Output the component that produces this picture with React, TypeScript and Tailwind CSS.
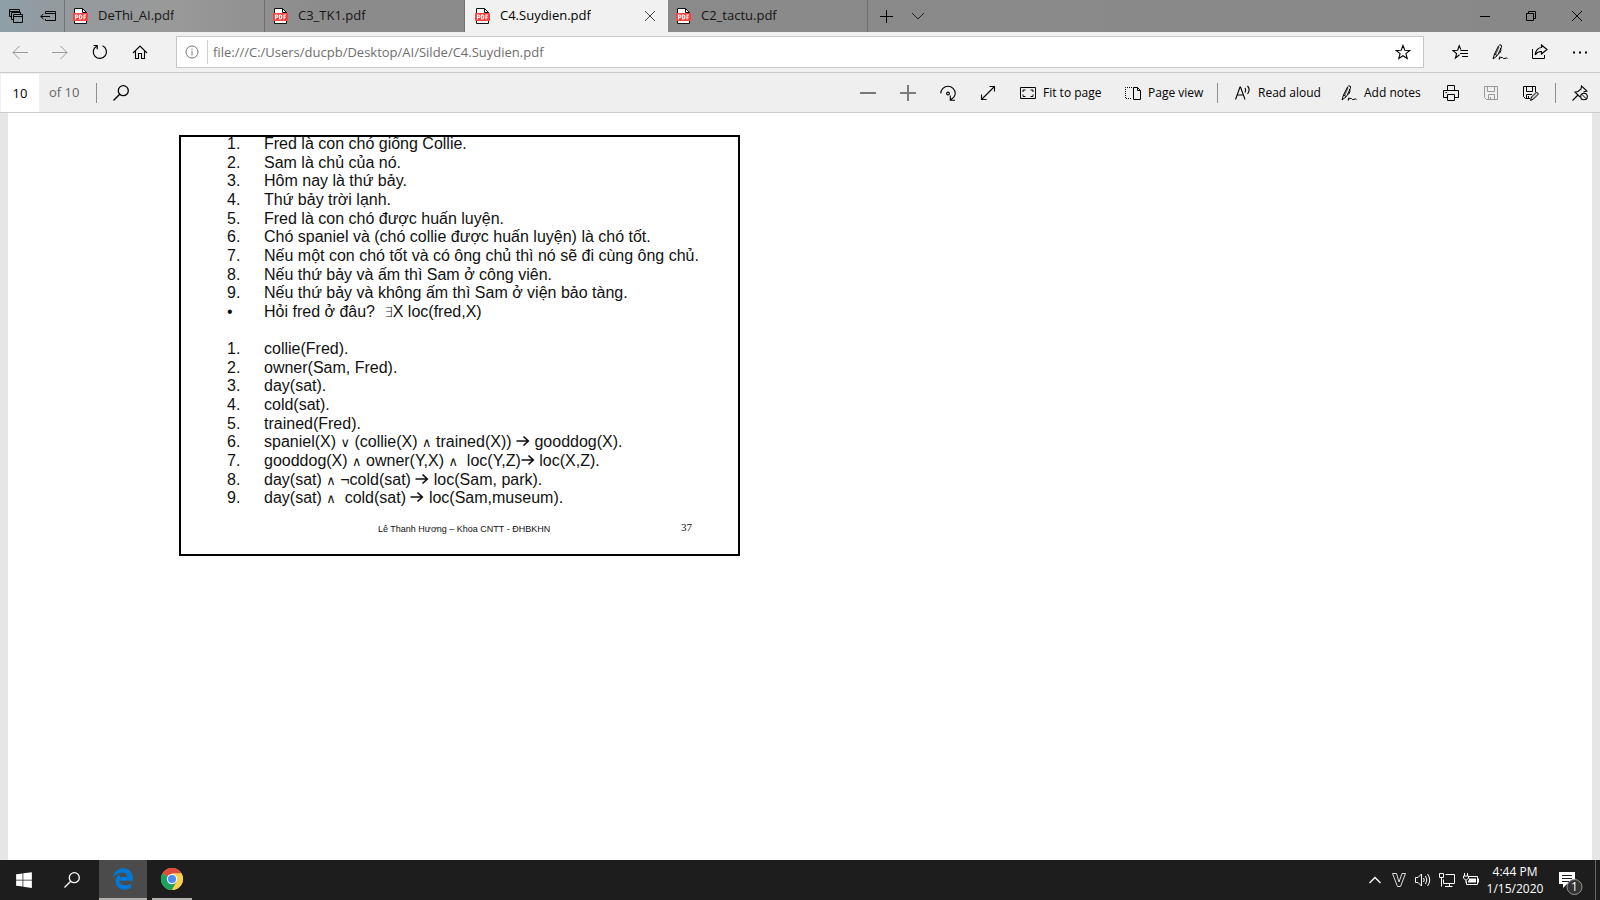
import React from "react";
import { FaEdgeLegacy, FaWindows } from "react-icons/fa6";

type IconProps = { size?: number; className?: string; sw?: number; children: React.ReactNode };

function Icon({ size = 16, className = "", sw = 1, children }: IconProps) {
  return (
    <svg
      width={size}
      height={size}
      viewBox={`0 0 ${size} ${size}`}
      fill="none"
      stroke="currentColor"
      strokeWidth={sw}
      className={`shrink-0 ${className}`}
      aria-hidden="true"
    >
      {children}
    </svg>
  );
}

function IconButton({ label, className = "w-10", children }: { label: string; className?: string; children: React.ReactNode }) {
  return (
    <button type="button" aria-label={label} className={`flex h-full shrink-0 items-center justify-center ${className}`}>
      {children}
    </button>
  );
}

function PdfIcon() {
  return (
    <svg width="15" height="16" viewBox="0 0 15 16" fill="none" className="shrink-0" aria-hidden="true">
      <path d="M1.500 .5H9.500L13.500 4.500V15.500H1.500Z" fill="#fff" stroke="#111" />
      <path d="M9.500 .5V4.500H13.500" stroke="#111" />
      <rect x="0" y="5" width="15" height="8" rx="1" fill="#f9423f" />
      <path
        d="M2.500 11.500V7H3.800a1.200 1.200 0 0 1 0 2.400H2.500M6.600 7V11H7.300a1.500 1.500 0 0 0 1.500-1.500V8.500A1.500 1.500 0 0 0 7.300 7ZM11 11.500V7H13M11 9.200H12.700"
        stroke="#fff"
        strokeWidth="1.100"
      />
    </svg>
  );
}

function PenIcon() {
  return (
    <Icon>
      <path d="M1 15L2.500 10L6.500 2Q7.500 .3 9 1Q10.200 1.800 9.300 3.600L5.500 11.500L1 15M2.500 10L5 11.500M8.500 4L9 6.500L7.500 9.500M8 12.500L7 15.300Q9 12.500 10.500 13.500Q11.500 15.300 13 14.400Q14.300 13.400 15.500 14.400" />
      <path d="M7 2.500L3.500 10.500" strokeWidth="1.4" strokeOpacity=".55" />
    </Icon>
  );
}

function SearchIcon() {
  return (
    <Icon sw={1.3}>
      <circle cx="10.300" cy="5.700" r="5" />
      <path d="M6.700 9.300L.5 15.500" />
    </Icon>
  );
}

function Tab({ title, active = false }: { title: string; active?: boolean }) {
  return (
    <div
      className={
        active
          ? "flex h-full w-[203px] min-w-0 items-center bg-[#f1f1f1] pl-2.5 text-black"
          : "flex h-full w-[200px] min-w-0 items-center border-r border-[#6f6f6f] pl-2 text-[#161616]"
      }
    >
      <button type="button" className="flex min-w-0 flex-1 items-center gap-2.5 text-left">
        <PdfIcon />
        <span className="truncate">{title}</span>
      </button>
      {active && (
        <IconButton label="Close tab" className="w-9">
          <Icon size={10} className="text-[#444]">
            <path d="M0 0L10 10M10 0L0 10" />
          </Icon>
        </IconButton>
      )}
    </div>
  );
}

function TabStrip() {
  return (
    <header className="flex h-8 shrink-0 items-stretch bg-[linear-gradient(90deg,#8e9fa9_0px,#949a9d_60px,#999999_170px,#8b8b8b_330px,#888888_100%)] text-[13px]">
      <div className="flex w-[65px] shrink-0 items-center border-r border-[#6f7679]">
        <IconButton label="Tabs you've set aside" className="w-8">
          <Icon className="text-black">
            <path d="M3 8.500H1.500V1.500H11.500V4M1.500 3.500H11.500" />
            <path d="M5 11.500H3.500V4.500H12.500V6" />
            <path d="M5.500 6.500H14.500V14.500H5.500ZM5.500 8.500H14.500" />
          </Icon>
        </IconButton>
        <IconButton label="Set these tabs aside" className="w-8">
          <Icon className="text-black">
            <path d="M5.500 6V3.500H15.500V12.500H5.500V11M5.500 5.500H15.500M.8 8.500H10M3.500 5.800L.8 8.500L3.500 11.200" />
          </Icon>
        </IconButton>
      </div>
      <Tab title="DeThi_AI.pdf" />
      <Tab title="C3_TK1.pdf" />
      <Tab title="C4.Suydien.pdf" active />
      <Tab title="C2_tactu.pdf" />
      <IconButton label="New tab" className="w-9">
        <Icon size={13} className="text-black">
          <path d="M6.500 0V13M0 6.500H13" />
        </Icon>
      </IconButton>
      <IconButton label="Show tab previews" className="w-7">
        <Icon size={14} className="text-[#222]">
          <path d="M1 4L7 10L13 4" />
        </Icon>
      </IconButton>
      <div className="flex-1" />
      <IconButton label="Minimize" className="w-[46px]">
        <Icon size={10} className="text-black">
          <path d="M0 5.500H10" />
        </Icon>
      </IconButton>
      <IconButton label="Restore" className="w-[46px]">
        <Icon size={10} className="text-black">
          <path d="M.5 2.500H7.500V9.500H.5ZM2.500 2.500V.5H9.500V7.500H7.500" />
        </Icon>
      </IconButton>
      <IconButton label="Close" className="w-[46px]">
        <Icon size={10} className="text-black">
          <path d="M0 0L10 10M10 0L0 10" />
        </Icon>
      </IconButton>
    </header>
  );
}

function AddressBar() {
  return (
    <nav className="flex h-[41px] shrink-0 items-center border-b border-[#cacaca] bg-[#f1f1f1] text-black">
      <IconButton label="Back">
        <Icon className="text-[#9b9b9b]">
          <path d="M16 8.500H1M7.500 2L1 8.500L7.500 15" />
        </Icon>
      </IconButton>
      <IconButton label="Forward">
        <Icon className="text-[#9b9b9b]">
          <path d="M0 8.500H15M8.500 2L15 8.500L8.500 15" />
        </Icon>
      </IconButton>
      <IconButton label="Refresh">
        <Icon sw={1.2}>
          <path d="M10.500 1.800A6.600 6.600 0 1 1 4.500 2.200M1.500 1.500H5.200V5.200" />
        </Icon>
      </IconButton>
      <IconButton label="Home">
        <Icon sw={1.1}>
          <path d="M1 9L8 2L15 9M3.500 7V14.500H6.500V9.500H9.500V14.500H12.500V7" />
        </Icon>
      </IconButton>
      <div className="ml-4 flex h-8 flex-1 items-center border border-[#c6c6c6] bg-white">
        <IconButton label="Site information" className="w-[30px]">
          <Icon size={14} className="text-[#777]">
            <circle cx="7" cy="7" r="6" />
            <path d="M7 6V10.500M7 3.500V5" />
          </Icon>
        </IconButton>
        <span className="h-6 w-px bg-[#cfcfcf]" />
        <input
          aria-label="Address"
          defaultValue="file:///C:/Users/ducpb/Desktop/AI/Silde/C4.Suydien.pdf"
          className="h-full min-w-0 flex-1 bg-transparent pl-[5px] text-[13px] text-[#6e6e6e] outline-none"
        />
        <IconButton label="Add to favorites">
          <Icon sw={1.1}>
            <path d="M8 1.500L9.800 6.200L14.800 6.400L10.900 9.600L12.200 14.400L8 11.700L3.800 14.400L5.100 9.600L1.200 6.400L6.200 6.200Z" />
          </Icon>
        </IconButton>
      </div>
      <div className="ml-4 flex h-full items-center">
        <IconButton label="Hub">
          <Icon sw={1.1}>
            <path d="M7.500 10.800L3.400 14L4.600 9.600L.8 6.500L5.600 6.300L7.200 1.700L8.800 5.500" />
            <path d="M8.500 6.500H16M8 9.500H16M10 12.500H16" />
          </Icon>
        </IconButton>
        <IconButton label="Make a web note">
          <PenIcon />
        </IconButton>
        <IconButton label="Share">
          <Icon>
            <path d="M.5 5V14.500H12.500V11" />
            <path d="M9.500 1L15 5.500L9.500 10V7.500Q5.500 7.300 3.200 10.800Q4 4 9.500 3.500Z" strokeWidth="1.200" />
          </Icon>
        </IconButton>
        <IconButton label="Settings and more">
          <Icon>
            <path d="M1 8.500H3M7 8.500H9M13 8.500H15" strokeWidth="2" />
          </Icon>
        </IconButton>
      </div>
    </nav>
  );
}

function ToolButton({ text, className, children }: { text: string; className: string; children: React.ReactNode }) {
  return (
    <button type="button" className={`flex h-full shrink-0 items-center gap-[7px] pl-3 whitespace-nowrap ${className}`}>
      {children}
      {text}
    </button>
  );
}

function Divider() {
  return <span className="h-5 w-px shrink-0 bg-[#8f8f8f]" />;
}

function PdfToolbar() {
  return (
    <div className="flex h-10 shrink-0 items-center border-b border-[#cacaca] bg-[#efefef] text-[12px] text-black">
      <input
        aria-label="Page number"
        defaultValue="10"
        className="ml-px h-[38px] w-[38px] bg-white text-center text-[13px] outline-none"
      />
      <span className="w-[57px] pl-[10px] text-[13px] text-[#666]">of 10</span>
      <Divider />
      <IconButton label="Search in document" className="w-[48px]">
        <SearchIcon />
      </IconButton>
      <div className="flex-1" />
      <IconButton label="Zoom out">
        <Icon className="text-[#777]">
          <path d="M0 8H16" strokeWidth="2" />
        </Icon>
      </IconButton>
      <IconButton label="Zoom in">
        <Icon className="text-[#666]">
          <path d="M0 8H16M8 0V16" strokeWidth="2" strokeOpacity=".85" />
        </Icon>
      </IconButton>
      <IconButton label="Rotate">
        <Icon sw={1.1}>
          <path d="M.8 8.500A7.200 7.200 0 0 1 15.200 8.500Q15 12.200 10.500 14.800M10.300 10.500V15.200H15" />
          <circle cx="8" cy="8.500" r="1.400" />
        </Icon>
      </IconButton>
      <IconButton label="Full screen">
        <Icon sw={1.1}>
          <path d="M1.500 14.500L14.500 1.500M9.500 1.500H14.500V6.500M1.500 9.500V14.500H6.500" />
        </Icon>
      </IconButton>
      <ToolButton text="Fit to page" className="w-[105px]">
        <Icon>
          <path d="M.5 2.500H15.500V13.500H.5Z" />
          <path d="M3 7V5H5.500M10.500 5H13V7M13 9.500V11.500H10.500M5.500 11.500H3V9.500" />
        </Icon>
      </ToolButton>
      <ToolButton text="Page view" className="w-[104px]">
        <Icon>
          <path d="M7 2.500H.5V13.500H7" strokeDasharray="1 1" />
          <path d="M8.500 2.500H12.500L15.500 5.500V14.500H8.500ZM12.500 2.500V5.500H15.500" />
        </Icon>
      </ToolButton>
      <Divider />
      <ToolButton text="Read aloud" className="ml-[5px] w-[106px]">
        <Icon sw={1.100}>
          <path d="M.5 14.500L5 2H5.500L10 14.500M2.200 10H8.300" />
          <path d="M10 3Q11.300 5 10 7.500M12.500 1Q15.800 4.500 12.500 9" />
        </Icon>
      </ToolButton>
      <ToolButton text="Add notes" className="w-[102px]">
        <PenIcon />
      </ToolButton>
      <IconButton label="Print">
        <Icon>
          <path d="M4.500 5.500V.5H11.500V5.500M4.500 12.500H.5V5.500H15.500V12.500H11.500M4.500 9.500H11.500V15.500H4.500ZM2.500 7.500H4" />
        </Icon>
      </IconButton>
      <IconButton label="Save">
        <Icon className="text-[#999]">
          <path d="M1.500 1.500H14.500V14.500H3.500L1.500 12.500ZM4.500 1.500V6.500H11.500V1.500M5.500 14.500V9.500H11.500V14.500M7.500 12V14.500" />
        </Icon>
      </IconButton>
      <IconButton label="Save as">
        <Icon>
          <path d="M7 13.500H2.500L.5 11.500V1.500H12.500V7M3.500 1.500V6.500H9.500V1.500M3.500 13.500V9.500H9M5.500 11V13.500" />
          <path d="M7.500 15.500L8.500 12L13.500 7L15.500 9L10.500 14Z" fill="#ccc" />
        </Icon>
      </IconButton>
      <div className="mx-1 flex">
        <Divider />
      </div>
      <IconButton label="Unpin toolbar">
        <Icon>
          <path d="M.5 15.500L6 10M8 12L3 7L6 6.500L9 4L9.500 1L15 6L11.500 7" strokeWidth="1.100" />
          <circle cx="12" cy="11.500" r="3.300" strokeWidth="1.100" />
          <path d="M9.700 9.200L14.300 13.800" />
        </Icon>
      </IconButton>
    </div>
  );
}

const And = () => <span className="font-['DejaVu_Sans'] text-[13px]">∧</span>;
const Or = () => <span className="font-['DejaVu_Sans'] text-[13px]">∨</span>;
const Arrow = () => (
  <svg width="14" height="12" viewBox="0 0 14 12" fill="none" stroke="currentColor" strokeWidth="1.700" className="inline-block align-baseline" role="img" aria-label="implies">
    <path d="M.5 6H12.500M7.500 1.500L12.300 6L7.500 10.500" />
  </svg>
);

const slideLines: [string, React.ReactNode][] = [
  ["1.", "Fred là con chó giống Collie."],
  ["2.", "Sam là chủ của nó."],
  ["3.", "Hôm nay là thứ bảy."],
  ["4.", "Thứ bảy trời lạnh."],
  ["5.", "Fred là con chó được huấn luyện."],
  ["6.", "Chó spaniel và (chó collie được huấn luyện) là chó tốt."],
  ["7.", "Nếu một con chó tốt và có ông chủ thì nó sẽ đi cùng ông chủ."],
  ["8.", "Nếu thứ bảy và ấm thì Sam ở công viên."],
  ["9.", "Nếu thứ bảy và không ấm thì Sam ở viện bảo tàng."],
  ["•", <>Hỏi fred ở đâu?{"  "}<span className="font-['DejaVu_Sans'] text-[14px] font-extralight">∃</span>X loc(fred,X)</>],
  ["", ""],
  ["1.", "collie(Fred)."],
  ["2.", "owner(Sam, Fred)."],
  ["3.", "day(sat)."],
  ["4.", "cold(sat)."],
  ["5.", "trained(Fred)."],
  ["6.", <>spaniel(X) <Or /> (collie(X) <And /> trained(X)) <Arrow /> gooddog(X).</>],
  ["7.", <>gooddog(X) <And /> owner(Y,X) <And />{"  "}loc(Y,Z)<Arrow /> loc(X,Z).</>],
  ["8.", <>day(sat) <And /> ¬cold(sat) <Arrow /> loc(Sam, park).</>],
  ["9.", <>day(sat) <And />{"  "}cold(sat) <Arrow /> loc(Sam,museum).</>],
];

function Slide() {
  return (
    <article className="flex h-[421px] w-[561px] flex-col overflow-hidden border-2 border-black bg-white font-['Liberation_Sans',Arial,sans-serif] text-[#111]">
      <div className="-mt-[2px] grid h-[373px] shrink-0 auto-rows-fr text-[16px] leading-[18px]">
        {slideLines.map(([mark, text], i) => (
          <div key={i} className="flex whitespace-pre pl-[46px]">
            <span className="w-[37px] shrink-0">{mark}</span>
            <span>{text}</span>
          </div>
        ))}
      </div>
      <footer className="mt-3 flex items-start pr-[46px] pl-[197px] text-[9px] leading-[18px]">
        <span className="flex-1">Lê Thanh Hương – Khoa CNTT - ĐHBKHN</span>
        <span className="font-['Liberation_Serif',serif] text-[11px] leading-[14px]">37</span>
      </footer>
    </article>
  );
}

function ChromeLogo() {
  return (
    <svg width="22" height="22" viewBox="0 0 22 22" aria-hidden="true">
      <circle cx="11" cy="11" r="11" fill="#fdd04b" />
      <path d="M11 11L1.500 5.500A11 11 0 0 1 20.500 5.500H11Z" fill="#dd4b3e" />
      <path d="M11 11L1.470 5.500A11 11 0 0 0 11 22L15.700 13.800Z" fill="#1aa260" />
      <path d="M11 11V5.500H20.500A11 11 0 0 1 11 22L15.700 13.800Z" fill="#fdd04b" />
      <circle cx="11" cy="11" r="5.200" fill="#f4f4f4" />
      <circle cx="11" cy="11" r="4" fill="#4b8bf5" />
    </svg>
  );
}

function Taskbar() {
  return (
    <footer className="flex h-10 shrink-0 items-stretch bg-[#1d1d1d] text-white">
      <IconButton label="Start" className="w-12">
        <FaWindows className="h-[18px] w-[16px]" />
      </IconButton>
      <IconButton label="Search" className="w-12">
        <SearchIcon />
      </IconButton>
      <IconButton label="Microsoft Edge" className="ml-[3px] w-12 border-b-2 border-[#b3b0ae] bg-[#4b4b4b]">
        <FaEdgeLegacy className="h-[22px] w-[22px] text-[#0078d7]" />
      </IconButton>
      <IconButton label="Google Chrome" className="ml-[5px] w-10 border-b-2 border-[#b3b0ae]">
        <ChromeLogo />
      </IconButton>
      <div className="flex-1" />
      <IconButton label="Show hidden icons" className="w-6">
        <Icon sw={1.300}>
          <path d="M2.500 11L8 5.500L13.500 11" />
        </Icon>
      </IconButton>
      <IconButton label="Keyboard language" className="w-6">
        <Icon className="text-[#ddd]">
          <path d="M1.500 1.500H5.500L8 10L11 1.500H14.500L9.500 14.500H6.500Z" />
        </Icon>
      </IconButton>
      <IconButton label="Volume" className="w-6">
        <Icon>
          <path d="M.5 5.500H3L6.500 2V14L3 10.500H.5ZM8.500 6Q10 8 8.500 10M10.500 4Q13.300 8 10.500 12M12.500 2Q17 8 12.500 14" />
        </Icon>
      </IconButton>
      <IconButton label="Network" className="w-6">
        <Icon>
          <path d="M6.500 2.500H15.500V11.500H4.500V7.500M10.500 11.500V14.500M6 14.500H13.500M.5 1.500H4.500V5.500H.5ZM2.500 5.500V14.500" />
        </Icon>
      </IconButton>
      <IconButton label="Battery" className="w-6">
        <Icon>
          <path d="M6 4.500H14.500V12.500H3.500V9.500M15.500 6.500V10.500M1.500 1V4M4.500 1V4M.5 4H5.500V6L3.500 8H2.500L.5 6ZM3 8V11" />
          <path d="M6 6.500H13V10.500H5V8.500H6Z" fill="currentColor" stroke="none" />
        </Icon>
      </IconButton>
      <button type="button" className="w-[64px] shrink-0 text-center text-[12px] leading-[17px] whitespace-nowrap">
        <span className="block">4:44 PM</span>
        <span className="block">1/15/2020</span>
      </button>
      <IconButton label="Notifications" className="w-12">
        <svg width="26" height="26" viewBox="0 0 26 26" aria-hidden="true" className="mt-1 ml-0.5">
          <path d="M0 3H16V15H8L4 19V15H0Z" fill="#fff" />
          <path d="M3 6.500H13M3 9.500H13M3 12.500H10" stroke="#1d1d1d" />
          <circle cx="15.500" cy="18" r="7.500" fill="#333" stroke="#999" />
          <text x="15.500" y="22" fill="#fff" fontSize="12" textAnchor="middle">1</text>
        </svg>
      </IconButton>
      <button type="button" aria-label="Show desktop" className="w-[5px] border-l border-[#666]" />
    </footer>
  );
}

export default function App() {
  return (
    <div className="flex min-h-screen flex-col bg-white font-['Segoe_UI','Open_Sans',sans-serif]">
      <TabStrip />
      <AddressBar />
      <PdfToolbar />
      <main className="flex-1 border-x-8 border-[#e6e6e6] bg-white pt-[22px] pl-[171px]">
        <Slide />
      </main>
      <Taskbar />
    </div>
  );
}
